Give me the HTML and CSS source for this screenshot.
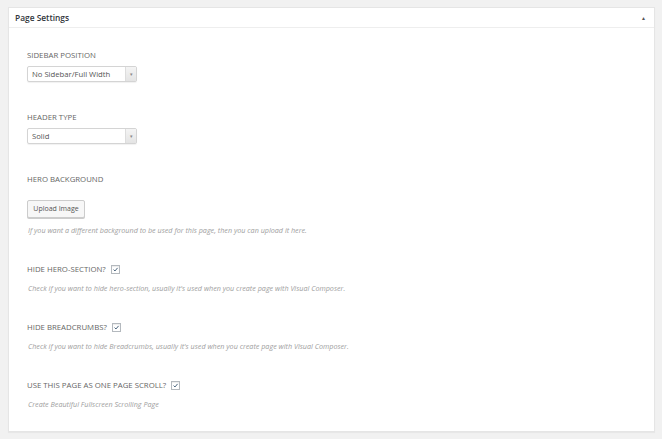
FILE: index.html
```html
<!DOCTYPE html>
<html>
<head>
<meta charset="utf-8">
<link rel="stylesheet" href="styles.css">
</head>
<body>
<div class="panel">
  <div class="panel-head">
    <span class="panel-title">Page Settings</span>
    <span class="toggle">&#9650;</span>
  </div>
  <div class="panel-body">
    <div class="field field-select">
      <div class="label">SIDEBAR POSITION</div>
      <div class="select"><span class="select-text">No Sidebar/Full Width</span><span class="select-arrow">&#9662;</span></div>
    </div>
    <div class="field field-select">
      <div class="label">HEADER TYPE</div>
      <div class="select"><span class="select-text">Solid</span><span class="select-arrow">&#9662;</span></div>
    </div>
    <div class="field">
      <div class="label">HERO BACKGROUND</div>
      <div class="button">Upload Image</div>
      <div class="desc desc-upload">If you want a different background to be used for this page, then you can upload it here.</div>
    </div>
    <div class="field">
      <div class="label">HIDE HERO-SECTION? <span class="check"><svg viewBox="0 0 9 9" width="9" height="9"><path d="M2 4.6 L3.8 6.4 L7.2 2.4" fill="none" stroke="#2b4a66" stroke-width="1.1"/></svg></span></div>
      <div class="desc">Check if you want to hide hero-section, usually it's used when you create page with Visual Composer.</div>
    </div>
    <div class="field">
      <div class="label">HIDE BREADCRUMBS? <span class="check"><svg viewBox="0 0 9 9" width="9" height="9"><path d="M2 4.6 L3.8 6.4 L7.2 2.4" fill="none" stroke="#2b4a66" stroke-width="1.1"/></svg></span></div>
      <div class="desc">Check if you want to hide Breadcrumbs, usually it's used when you create page with Visual Composer.</div>
    </div>
    <div class="field">
      <div class="label">USE THIS PAGE AS ONE PAGE SCROLL? <span class="check"><svg viewBox="0 0 9 9" width="9" height="9"><path d="M2 4.6 L3.8 6.4 L7.2 2.4" fill="none" stroke="#2b4a66" stroke-width="1.1"/></svg></span></div>
      <div class="desc">Create Beautiful Fullscreen Scrolling Page</div>
    </div>
  </div>
</div>
</body>
</html>
```
FILE: styles.css
```css
* { box-sizing: border-box; }
html, body { margin: 0; padding: 0; }
body {
  background: #f1f1f1;
  font-family: "Open Sans", "Liberation Sans", sans-serif;
  padding: 7px 7px 7px 8px;
  color: #555;
}
.panel {
  width: 647px;
  height: 425px;
  background: #fff;
  border: 1px solid #e5e5e5;
  box-shadow: 0 1px 1px rgba(0,0,0,0.04);
}
.panel-head {
  height: 20px;
  border-bottom: 1px solid #eee;
  display: flex;
  align-items: center;
  justify-content: space-between;
  padding: 0 8px 0 6px;
}
.panel-title {
  font-size: 8.4px;
  font-weight: 600;
  color: #32373c;
}
.toggle {
  font-size: 5px;
  color: #555;
}
.panel-body {
  padding: 21px 18px 0 18px;
}
.field + .field { margin-top: 27px; }
.field-select { padding-bottom: 2px; }
.label {
  font-size: 7.8px;
  line-height: 12px;
  color: #666;
  display: flex;
  align-items: center;
  white-space: pre;
}
.check {
  display: inline-flex;
  width: 9px;
  height: 9px;
  border: 1px solid #b4b9be;
  background: #fff;
  margin-left: 3px;
  align-items: center;
  justify-content: center;
  box-shadow: inset 0 1px 1px rgba(0,0,0,0.08);
}
.check svg { display: block; }
.select {
  margin-top: 5px;
  width: 110px;
  height: 16px;
  border: 1px solid #d4d4d4;
  border-radius: 2px;
  display: flex;
  background: #fff;
  box-shadow: 0 1px 1px rgba(0,0,0,0.06);
}
.select-text {
  flex: 1;
  font-size: 7.7px;
  line-height: 14px;
  padding-left: 4px;
  color: #555;
}
.select-arrow {
  width: 11px;
  border-left: 1px solid #ddd;
  background: linear-gradient(#f4f4f4, #e4e4e4);
  font-size: 5px;
  color: #888;
  display: flex;
  align-items: center;
  justify-content: center;
}
.button {
  margin-top: 15px;
  display: inline-block;
  width: 58px;
  height: 18px;
  text-align: center;
  font-size: 7px;
  line-height: 16px;
  border: 1px solid #ccc;
  border-radius: 2px;
  background: #f7f7f7;
  color: #555;
  box-shadow: 0 1px 0 #ccc;
}
.desc {
  margin-top: 7px;
  font-size: 7.2px;
  line-height: 12px;
  font-style: italic;
  color: #a0a0a0;
  padding-left: 1px;
}
.desc-upload { margin-top: 6px; }
```
